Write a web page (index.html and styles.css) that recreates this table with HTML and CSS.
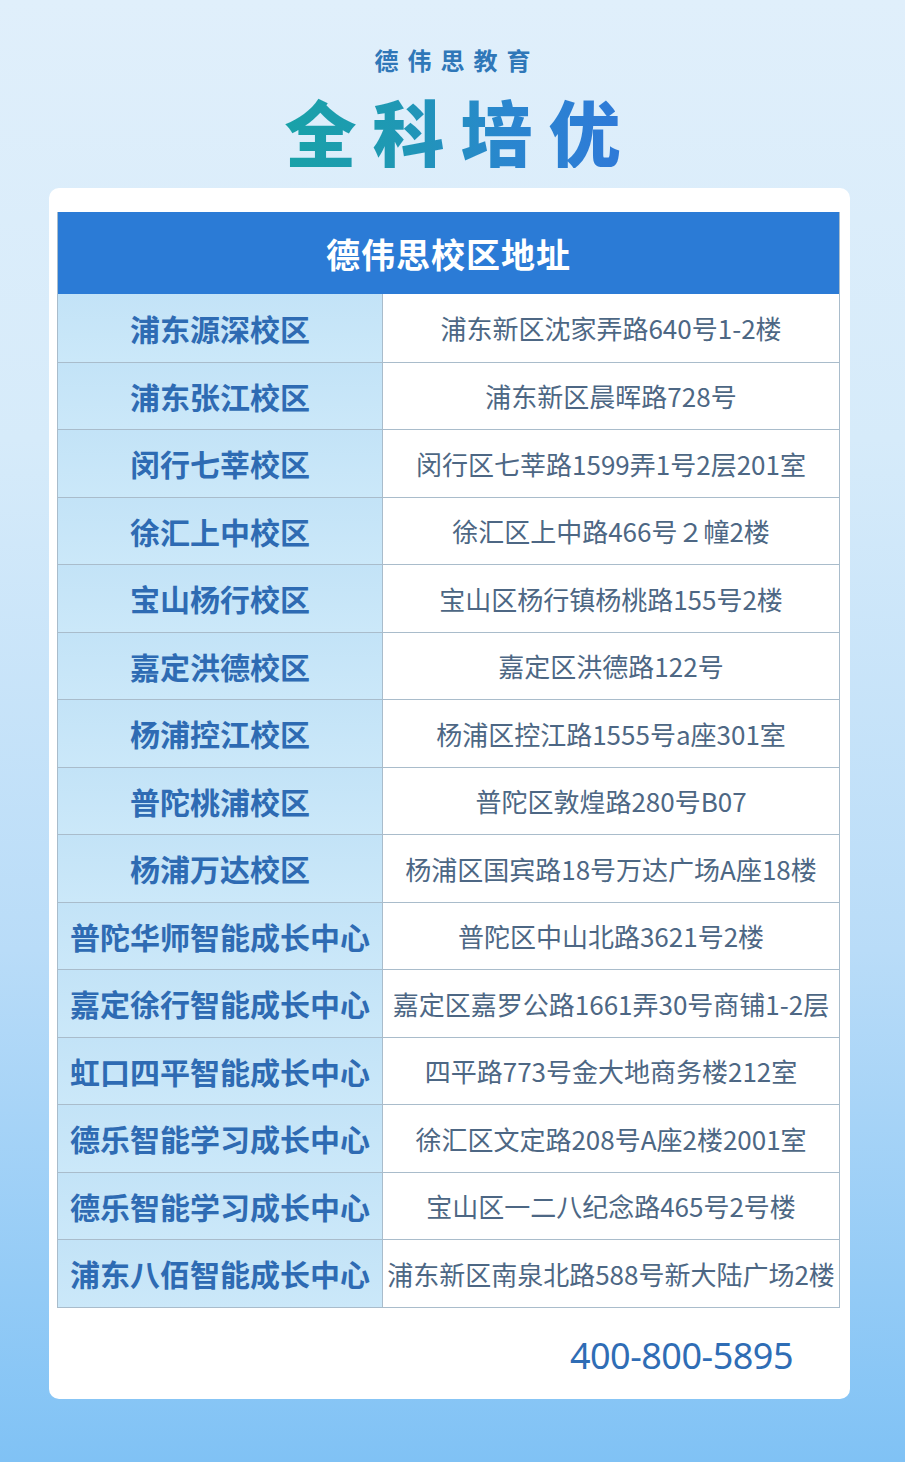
FILE: index.html
```html
<!DOCTYPE html>
<html lang="zh-CN">
<head>
<meta charset="utf-8">
<title>德伟思校区地址</title>
<link rel="stylesheet" href="styles.css">
</head>
<body>
<div class="page">
  <div class="brand">德伟思教育</div>
  <h1 class="title">全科培优</h1>
  <div class="card">
    <div class="table">
      <div class="thead">德伟思校区地址</div>
      <div class="row"><div class="name">浦东源深校区</div><div class="addr">浦东新区沈家弄路640号1-2楼</div></div>
      <div class="row"><div class="name">浦东张江校区</div><div class="addr">浦东新区晨晖路728号</div></div>
      <div class="row"><div class="name">闵行七莘校区</div><div class="addr">闵行区七莘路1599弄1号2层201室</div></div>
      <div class="row"><div class="name">徐汇上中校区</div><div class="addr">徐汇区上中路466号２幢2楼</div></div>
      <div class="row"><div class="name">宝山杨行校区</div><div class="addr">宝山区杨行镇杨桃路155号2楼</div></div>
      <div class="row"><div class="name">嘉定洪德校区</div><div class="addr">嘉定区洪德路122号</div></div>
      <div class="row"><div class="name">杨浦控江校区</div><div class="addr">杨浦区控江路1555号a座301室</div></div>
      <div class="row"><div class="name">普陀桃浦校区</div><div class="addr">普陀区敦煌路280号B07</div></div>
      <div class="row"><div class="name">杨浦万达校区</div><div class="addr">杨浦区国宾路18号万达广场A座18楼</div></div>
      <div class="row"><div class="name">普陀华师智能成长中心</div><div class="addr">普陀区中山北路3621号2楼</div></div>
      <div class="row"><div class="name">嘉定徐行智能成长中心</div><div class="addr">嘉定区嘉罗公路1661弄30号商铺1-2层</div></div>
      <div class="row"><div class="name">虹口四平智能成长中心</div><div class="addr">四平路773号金大地商务楼212室</div></div>
      <div class="row"><div class="name">德乐智能学习成长中心</div><div class="addr">徐汇区文定路208号A座2楼2001室</div></div>
      <div class="row"><div class="name">德乐智能学习成长中心</div><div class="addr">宝山区一二八纪念路465号2号楼</div></div>
      <div class="row"><div class="name">浦东八佰智能成长中心</div><div class="addr">浦东新区南泉北路588号新大陆广场2楼</div></div>
    </div>
    <div class="phone">400-800-5895</div>
  </div>
</div>
</body>
</html>
```

FILE: styles.css
```css
* { box-sizing: border-box; }
html, body { margin: 0; padding: 0; background: #ffffff; }
body {
  width: 905px;
  height: 1474px;
  font-family: "Noto Sans CJK SC", "Noto Sans", sans-serif;
}
.page {
  height: 1462px;
  padding-top: 45px;
  background: linear-gradient(180deg, #e0effb 0%, #d6ebfa 30%, #b9dcf8 65%, #80c2f5 100%);
}
.brand {
  text-align: center;
  font-size: 24px;
  line-height: 30px;
  font-weight: 700;
  letter-spacing: 9px;
  padding-left: 9px;
  color: #2f77b8;
}
.title {
  width: max-content;
  margin: 17px auto 20px;
  text-align: center;
  font-size: 72px;
  line-height: 76px;
  font-weight: 900;
  letter-spacing: 16px;
  padding-left: 16px;
  white-space: nowrap;
  background: linear-gradient(90deg, #18a3a6 0%, #1f98b4 35%, #2a86cf 65%, #2f78d9 100%);
  -webkit-background-clip: text;
  background-clip: text;
  color: transparent;
}
.card {
  margin: 0 55px 0 49px;
  background: #ffffff;
  border-radius: 10px;
  padding: 24px 10px 0 8px;
}
.table {
  border-left: 1px solid #a9bccb;
  border-right: 1px solid #a9bccb;
  border-bottom: 1px solid #a9bccb;
}
.thead {
  height: 82px;
  background: #2b7bd6;
  color: #ffffff;
  font-size: 34px;
  font-weight: 700;
  letter-spacing: 1px;
  display: flex;
  align-items: center;
  justify-content: center;
}
.row {
  display: grid;
  grid-template-columns: 325px 1fr;
  height: 67.5px;
  border-top: 1px solid #a9bccb;
}
.thead + .row { border-top: none; }
.name {
  background: linear-gradient(180deg, #c3e3f7 0%, #cbe8f9 100%);
  border-right: 1px solid #a9bccb;
  color: #2e6bb3;
  font-size: 30px;
  font-weight: 700;
  display: flex;
  align-items: center;
  justify-content: center;
  white-space: nowrap;
}
.addr {
  color: #4d6784;
  font-size: 26px;
  display: flex;
  align-items: center;
  justify-content: center;
  white-space: nowrap;
  letter-spacing: 0;
}
.phone {
  text-align: right;
  padding: 26px 47px 22px 0;
  font-family: "Noto Sans", "Liberation Sans", sans-serif;
  font-size: 36px;
  line-height: 43px;
  color: #2f6db5;
  letter-spacing: -0.5px;
}
```
